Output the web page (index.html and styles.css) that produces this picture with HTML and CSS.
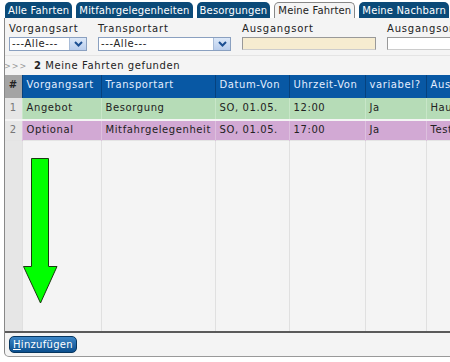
FILE: index.html
```html
<!DOCTYPE html>
<html lang="de">
<head>
    <meta charset="UTF-8">
    <title>Meine Fahrten</title>
    <link rel="stylesheet" href="styles.css">
</head>
<body>

<div class="tabs">
    <div class="tab">Alle Fahrten</div>
    <div class="tab">Mitfahrgelegenheiten</div>
    <div class="tab">Besorgungen</div>
    <div class="tab active">Meine Fahrten</div>
    <div class="tab">Meine Nachbarn</div>
</div>

<div class="panel">
    <div class="filters">
        <div class="field">
            <label>Vorgangsart</label>
            <div class="select small"><span>---Alle---</span><b class="drop"><svg width="9" height="6" viewBox="0 0 9 6"><path d="M1 1 L4.5 4.5 L8 1" fill="none" stroke="#1c4f92" stroke-width="2"/></svg></b></div>
        </div>
        <div class="field">
            <label>Transportart</label>
            <div class="select wide"><span>---Alle---</span><b class="drop"><svg width="9" height="6" viewBox="0 0 9 6"><path d="M1 1 L4.5 4.5 L8 1" fill="none" stroke="#1c4f92" stroke-width="2"/></svg></b></div>
        </div>
        <div class="field">
            <label>Ausgangsort</label>
            <div class="input filled"></div>
        </div>
        <div class="field">
            <label>Ausgangsort</label>
            <div class="input"></div>
        </div>
    </div>

    <div class="found"><span class="arrows">&gt;&gt;&gt;</span> <strong>2</strong> Meine Fahrten gefunden</div>

    <div class="grid">
        <table>
            <colgroup>
                <col style="width:17px">
                <col style="width:79px">
                <col style="width:114px">
                <col style="width:74px">
                <col style="width:76px">
                <col style="width:61px">
                <col style="width:100px">
            </colgroup>
            <thead>
                <tr>
                    <th class="num">#</th>
                    <th>Vorgangsart</th>
                    <th>Transportart</th>
                    <th>Datum-Von</th>
                    <th>Uhrzeit-Von</th>
                    <th>variabel?</th>
                    <th>Ausgangsort</th>
                </tr>
            </thead>
            <tbody>
                <tr class="offer">
                    <td class="num">1</td>
                    <td>Angebot</td>
                    <td>Besorgung</td>
                    <td>SO, 01.05.</td>
                    <td>12:00</td>
                    <td>Ja</td>
                    <td>Hauptstraße</td>
                </tr>
                <tr class="optional">
                    <td class="num">2</td>
                    <td>Optional</td>
                    <td>Mitfahrgelegenheit</td>
                    <td>SO, 01.05.</td>
                    <td>17:00</td>
                    <td>Ja</td>
                    <td>Teststraße</td>
                </tr>
                <tr class="filler">
                    <td class="num"></td>
                    <td></td>
                    <td></td>
                    <td></td>
                    <td></td>
                    <td></td>
                    <td></td>
                </tr>
            </tbody>
        </table>

        <svg class="hint-arrow" width="36" height="148" viewBox="0 0 36 148">
            <path d="M8.5 0.5 H25.5 V108.5 H34 L17.5 145 L0.5 108.5 H8.5 Z" fill="#00ff00" stroke="#1a3a10" stroke-width="1"/>
        </svg>
    </div>

    <div class="footer">
        <button class="add-btn"><u>H</u>inzufügen</button>
    </div>
</div>

</body>
</html>
```

FILE: styles.css
```css
body {
    margin: 0;
    width: 450px;
    height: 362px;
    overflow: hidden;
    background-color: #ffffff;
    font-family: "DejaVu Sans", Verdana, sans-serif;
    font-size: 10px;
    letter-spacing: 0.4px;
    color: #222;
}

.tabs {
    display: flex;
    gap: 4px;
    padding: 2px 0 0 5px;
    height: 16px;
    white-space: nowrap;
}

.tab {
    padding: 2px 3px 0 3px;
    background-color: #0b4a78;
    color: #ffffff;
    border-radius: 5px 5px 0 0;
    line-height: 14px;
    letter-spacing: 0.15px;
}

.tab.active {
    background-color: #f4f4f4;
    color: #222;
    border: 1px solid #888;
    border-bottom: none;
    padding: 1px 3px 0 3px;
}

.panel {
    margin-left: 4px;
    width: 460px;
    border-left: 1px solid #888;
    border-bottom: 1px solid #999;
    border-bottom-left-radius: 5px;
    background-color: #f4f4f4;
}

.filters {
    display: flex;
    padding: 4px 0 0 4px;
    height: 33px;
    border-bottom: 1px solid #e4e4e4;
    white-space: nowrap;
}

.field {
    display: flex;
    flex-direction: column;
    margin-right: 11px;
}

.field label {
    line-height: 13px;
    margin-bottom: 2px;
    letter-spacing: 0.8px;
}

.select {
    display: flex;
    height: 12px;
    border: 1px solid #8aa0c0;
    background-color: #ffffff;
    letter-spacing: 0.6px;
}

.select span {
    flex: 1;
    padding-left: 2px;
    line-height: 12px;
}

.select.small {
    width: 76px;
}

.select.wide {
    width: 131px;
}

.drop {
    width: 16px;
    display: flex;
    align-items: center;
    justify-content: center;
    background: linear-gradient(#dce8f8, #b9cdec);
    border-left: 1px solid #a8bcd8;
}

.input {
    width: 132px;
    height: 11px;
    border: 1px solid #999;
    border-bottom-color: #ccc;
    background-color: #ffffff;
}

.input.filled {
    background-color: #f6ecd0;
}

.found {
    padding: 3px 0 0 0;
    height: 16px;
    line-height: 14px;
    letter-spacing: 0.6px;
}

.arrows {
    color: #999;
    font-size: 8px;
    letter-spacing: 1px;
    margin-left: -1px;
    margin-right: 3px;
}

.grid {
    position: relative;
}

table {
    border-collapse: collapse;
    table-layout: fixed;
    width: 521px;
}

th, td {
    text-align: left;
    vertical-align: top;
    white-space: nowrap;
    overflow: hidden;
    padding: 0 4px;
    border-right: 1px solid #e0e0e0;
    font-weight: normal;
}

th {
    background-color: #0858a4;
    color: #e4eeff;
    height: 19px;
    padding-top: 4px;
    border-right: 1px solid #06427e;
    letter-spacing: 0.6px;
}

th.num {
    background-color: #a4a4a4;
    color: #222;
    text-align: center;
    padding: 4px 0 0 0;
    font-weight: bold;
}

td.num {
    background-color: #e6e6e6;
    color: #777;
    text-align: center;
    padding-left: 0;
    padding-right: 0;
}

.offer td {
    background-color: #b6dcb7;
    height: 17px;
    padding-top: 4px;
    border-right-color: #c8e6c8;
}

.optional td {
    background-color: #d2a9d4;
    height: 16px;
    padding-top: 3px;
    border-top: 2px solid #f4f4f4;
    border-right-color: #ddc0de;
}

.optional td, .offer td {
    letter-spacing: 0.6px;
}

.offer td.num, .optional td.num {
    background-color: #e6e6e6;
}

.filler td {
    height: 190px;
    border-top: 1px solid #e4e4e4;
}

.hint-arrow {
    position: absolute;
    left: 18px;
    top: 83px;
}

.footer {
    border-top: 2px solid #5a5a5a;
    padding: 3px 0 3px 4px;
    height: 17px;
}

.add-btn {
    height: 17px;
    padding: 0 3px;
    border: 1px solid #07365f;
    border-radius: 5px;
    background: linear-gradient(#3d86c6, #0b4f8e);
    color: #ffffff;
    font-family: "DejaVu Sans", Verdana, sans-serif;
    font-size: 10px;
    letter-spacing: 0.3px;
    line-height: 14px;
    cursor: pointer;
}
```
